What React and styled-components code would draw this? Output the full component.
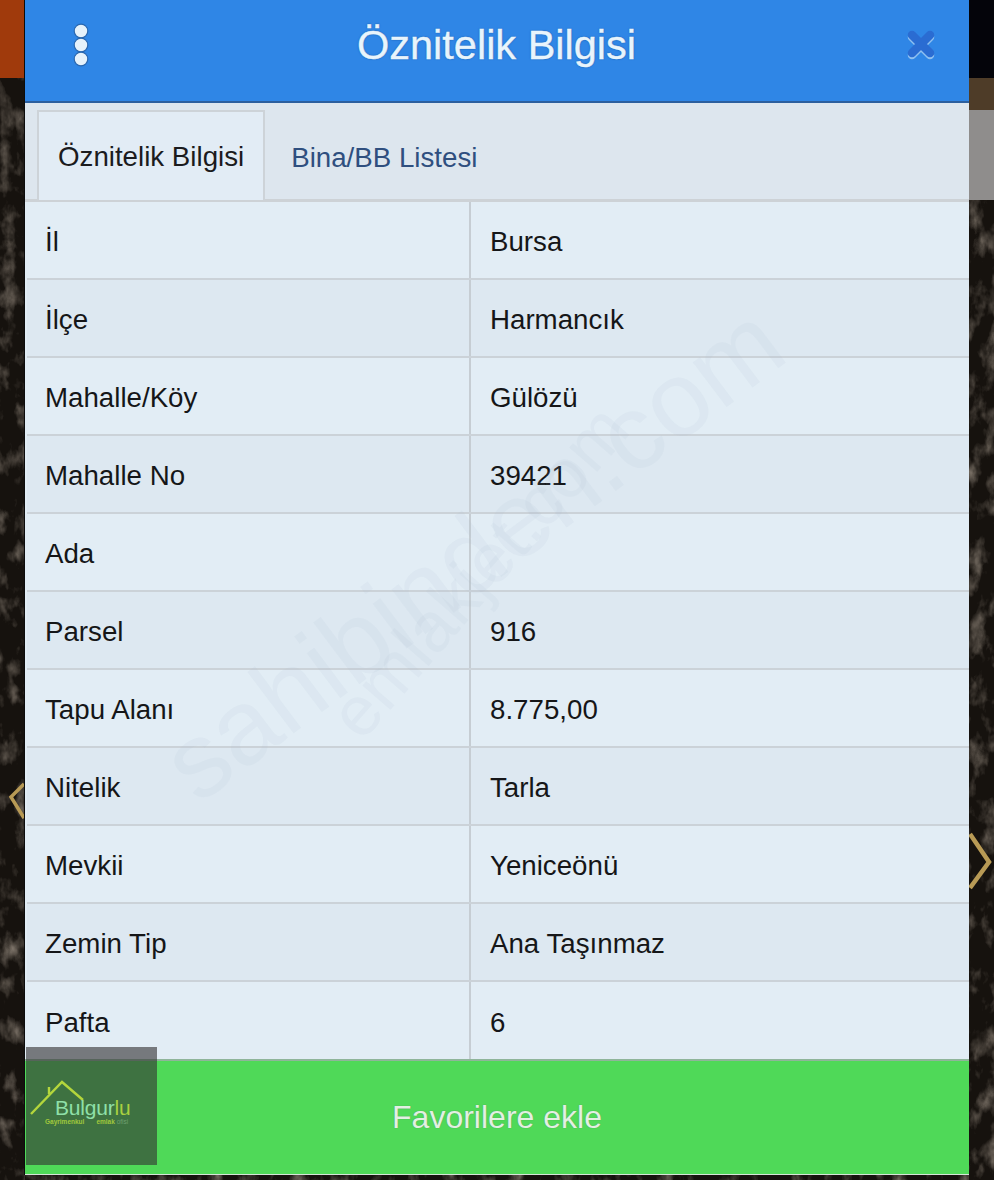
import React from "react";
import styled, { createGlobalStyle } from "styled-components";

const Global = createGlobalStyle`
  html, body { margin: 0; padding: 0; background: #15110d; }
  body { font-family: "Liberation Sans", Arial, sans-serif; }
`;

const Page = styled.div`
  position: relative;
  width: 994px;
  height: 1180px;
  overflow: hidden;
  display: grid;
  grid-template-columns: 25px 944px 25px;
`;
const Strip = styled.div`
  position: relative;
  display: flex;
  flex-direction: column;
  background: #1a1512;
`;
const StripBlock = styled.div`
  height: ${(p) => p.$h}px;
  background: ${(p) => p.$c};
  flex: none;
`;
const TerrainBox = styled.div`
  flex: 1;
  min-height: 0;
  overflow: hidden;
  svg { display: block; width: 100%; height: 100%; }
`;
const Chevron = styled.svg`
  position: absolute;
  left: ${(p) => p.$x}px;
  top: ${(p) => p.$y}px;
`;
const Center = styled.div`
  display: flex;
  flex-direction: column;
  min-width: 0;
`;
const Panel = styled.main`
  position: relative;
  height: 1175px;
  flex: none;
  display: flex;
  flex-direction: column;
  background: #e2edf5;
  box-shadow: -1px 0 0 #0c0c0c, 1px 0 0 #0c0c0c;
  overflow: hidden;
`;
const Header = styled.header`
  height: 103px;
  flex: none;
  display: flex;
  align-items: center;
  justify-content: space-between;
  padding: 0 32px 12px 40px;
  box-sizing: border-box;
  background: #2f86e6;
  border-bottom: 2px solid #2c5f9e;
`;
const IconSlot = styled.div`
  width: 32px;
  display: flex;
  justify-content: center;
`;
const Title = styled.h1`
  margin: 0 9px 0 0;
  font-size: 41.5px;
  font-weight: 400;
  color: #e8f4fc;
  -webkit-text-stroke: 0.4px #e8f4fc;
  text-shadow: 0 0 2px #1d5fae, 0 0 1px #1d5fae;
`;
const TabBar = styled.nav`
  height: 99px;
  flex: none;
  box-sizing: border-box;
  display: flex;
  align-items: flex-end;
  padding-left: 12px;
  background: #dde6ee;
  border-bottom: 3px solid #cdd2d6;
`;
const Tab = styled.div`
  height: ${(p) => (p.$active ? 90 : 87)}px;
  margin-bottom: ${(p) => (p.$active ? -1 : 0)}px;
  box-sizing: border-box;
  display: flex;
  align-items: center;
  padding: ${(p) => (p.$active ? 2 : 4)}px ${(p) => (p.$active ? 19 : 26)}px 0;
  font-size: 27.7px;
  color: ${(p) => (p.$active ? "#1b1b1d" : "#2f4f7f")};
  background: ${(p) => (p.$active ? "#e2ecf5" : "transparent")};
  border: ${(p) => (p.$active ? "2px solid #cdd3d8" : "none")};
  border-bottom: none;
`;
const Rows = styled.div`
  flex: 1;
  min-height: 0;
  overflow: hidden;
  display: flex;
  flex-direction: column;
  padding-left: 2px;
`;
const Row = styled.div`
  height: 78px;
  flex: none;
  box-sizing: border-box;
  display: grid;
  grid-template-columns: 442px 1fr;
  background: ${(p) => (p.$alt ? "#dde8f1" : "#e2edf5")};
  border-bottom: ${(p) => (p.$last ? "none" : "2px solid #cbd2d8")};
`;
const Cell = styled.div`
  display: flex;
  align-items: center;
  padding: 3px 0 0 ${(p) => (p.$value ? 19 : 18)}px;
  font-size: 27.7px;
  color: #151618;
  border-left: ${(p) => (p.$value ? "2px solid #c6cdd3" : "none")};
`;
const Action = styled.button`
  height: 116px;
  flex: none;
  border: none;
  border-top: 2px solid #8fb59a;
  border-bottom: 1px solid #d6e6d8;
  background: #4fd958;
  color: #e2f0e2;
  font: 400 32px "Liberation Sans", Arial, sans-serif;
  padding: 0;
  text-shadow: 0 0 1px #4a8a55;
`;
const Watermark = styled.div`
  position: absolute;
  left: ${(p) => p.$x}px;
  top: ${(p) => p.$y}px;
  font-size: ${(p) => p.$size}px;
  line-height: 1;
  white-space: nowrap;
  color: rgba(170, 190, 205, 0.1);
  transform-origin: left bottom;
  transform: rotate(${(p) => p.$deg}deg);
  pointer-events: none;
`;
const LogoBadge = styled.div`
  position: absolute;
  left: 26px;
  top: 1047px;
  width: 131px;
  height: 118px;
  background: rgba(52, 50, 52, 0.62);
`;
const LogoMark = styled.svg`
  position: absolute;
  left: 4px;
  top: 32px;
`;
const LogoName = styled.div`
  position: absolute;
  left: 29px;
  top: 50px;
  font: 400 21px/21px "Liberation Sans", Arial, sans-serif;
  letter-spacing: -0.2px;
  color: #8fe0a8;
  span { color: #a8d040; }
`;
const LogoSub = styled.div`
  position: absolute;
  left: 19px;
  top: 71px;
  display: flex;
  gap: 12px;
  font: 700 6.5px/7px "Liberation Sans", Arial, sans-serif;
  color: #a0c83c;
  i { font-style: normal; color: #6fa070; font-weight: 400; }
`;

const Terrain = ({ id, seed }) => (
  <svg preserveAspectRatio="none" aria-hidden="true">
    <filter id={id} x="0" y="0" width="100%" height="100%">
      <feTurbulence type="fractalNoise" baseFrequency="0.06 0.035" numOctaves="4" seed={seed} />
      <feColorMatrix values="0 0 0 0 0.26  0 0 0 0 0.22  0 0 0 0 0.18  1.4 1.4 0 0 -1.4" />
    </filter>
    <rect width="100%" height="100%" fill="#16120e" />
    <rect width="100%" height="100%" filter={`url(#${id})`} />
  </svg>
);

const data = [
  ["İl", "Bursa"],
  ["İlçe", "Harmancık"],
  ["Mahalle/Köy", "Gülözü"],
  ["Mahalle No", "39421"],
  ["Ada", ""],
  ["Parsel", "916"],
  ["Tapu Alanı", "8.775,00"],
  ["Nitelik", "Tarla"],
  ["Mevkii", "Yeniceönü"],
  ["Zemin Tip", "Ana Taşınmaz"],
  ["Pafta", "6"],
];

export default function App() {
  return (
    <Page>
      <Global />
      <Strip>
        <StripBlock $h={78} $c="#a03a0c" />
        <TerrainBox><Terrain id="tl" seed={3} /></TerrainBox>
        <Chevron $x={8} $y={782} width="17" height="40" viewBox="0 0 17 40">
          <path d="M16 2 L3 15 L16 36" fill="none" stroke="#b89a55" strokeWidth="3.5" />
        </Chevron>
      </Strip>
      <Center>
        <Panel>
          <Header>
            <IconSlot>
              <svg width="20" height="44" viewBox="0 0 20 44">
                <g fill="#e6f2fb" stroke="#2a68b0" strokeWidth="1.2">
                  <circle cx="10" cy="8" r="6.8" />
                  <circle cx="10" cy="22" r="6.8" />
                  <circle cx="10" cy="36" r="6.8" />
                </g>
              </svg>
            </IconSlot>
            <Title>Öznitelik Bilgisi</Title>
            <IconSlot>
              <svg width="30" height="32" viewBox="0 0 30 32">
                <path d="M6 8 L24 26 M24 8 L6 26" stroke="#8fc0f0" strokeWidth="8.5" strokeLinecap="round" />
                <path d="M6 6 L24 24 M24 6 L6 24" stroke="#2a6cd2" strokeWidth="8.5" strokeLinecap="round" />
              </svg>
            </IconSlot>
          </Header>
          <TabBar>
            <Tab $active>Öznitelik Bilgisi</Tab>
            <Tab>Bina/BB Listesi</Tab>
          </TabBar>
          <Rows>
            {data.map(([k, v], i) => (
              <Row key={k} $alt={i % 2 === 1} $last={i === data.length - 1}>
                <Cell>{k}</Cell>
                <Cell $value>{v}</Cell>
              </Row>
            ))}
          </Rows>
          <Action>Favorilere ekle</Action>
        </Panel>
        <TerrainBox><Terrain id="tb" seed={7} /></TerrainBox>
      </Center>
      <Strip>
        <StripBlock $h={78} $c="#04040a" />
        <StripBlock $h={32} $c="#4e3c28" />
        <StripBlock $h={90} $c="#8f8d8c" />
        <TerrainBox><Terrain id="tr" seed={11} /></TerrainBox>
        <Chevron $x={0} $y={832} width="24" height="60" viewBox="0 0 24 60">
          <path d="M1 2 L20 30 L1 56" fill="none" stroke="#b89a55" strokeWidth="4.5" />
        </Chevron>
      </Strip>
      <Watermark $x={208} $y={712} $size={106} $deg={-37}>sahibinden.com</Watermark>
      <Watermark $x={370} $y={680} $size={70} $deg={-49}>emlakjet.com</Watermark>
      <LogoBadge>
        <LogoMark width="70" height="46" viewBox="0 0 70 46">
          <path d="M1 35 L32 3 L53 21 M19 15 V8" fill="none" stroke="#b4d63c" strokeWidth="2.4" />
        </LogoMark>
        <LogoName>Bulgur<span>lu</span></LogoName>
        <LogoSub><span>Gayrimenkul</span><span>emlak <i>ofisi</i></span></LogoSub>
      </LogoBadge>
    </Page>
  );
}
